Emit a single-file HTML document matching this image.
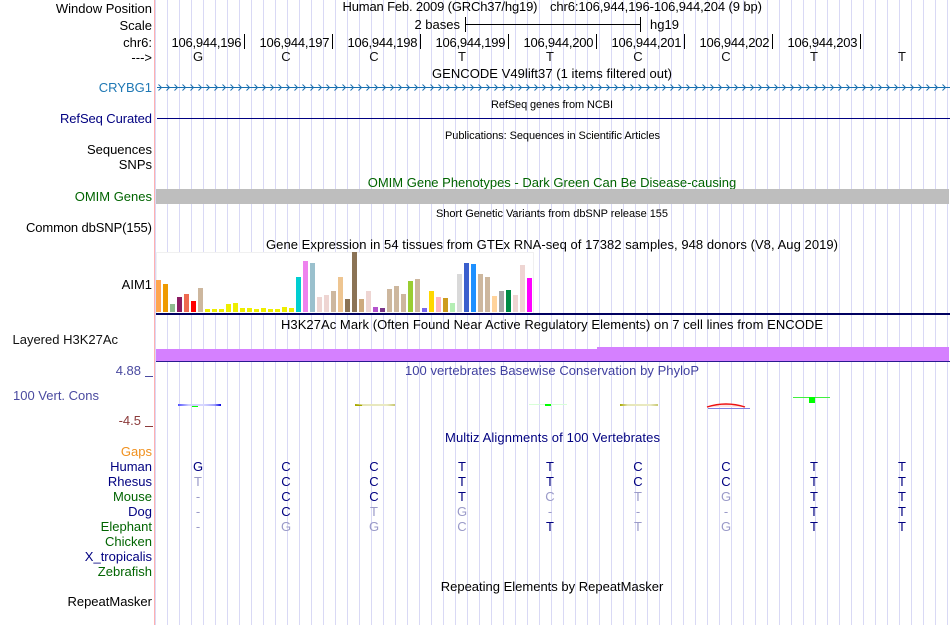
<!DOCTYPE html>
<html><head><meta charset="utf-8"><title>Genome Browser</title>
<style>
html,body{margin:0;padding:0;background:#fff;width:950px;height:625px;overflow:hidden}
svg{display:block;font-family:"Liberation Sans",sans-serif;font-size:13px}
.l{text-anchor:end}.c{text-anchor:middle}.s{font-size:11px}
.n{fill:#000080}.g{fill:#006400}
</style></head><body>
<svg width="950" height="625" viewBox="0 0 950 625" xmlns="http://www.w3.org/2000/svg">
<defs>
<pattern id="grid" x="155" y="0" width="12" height="625" patternUnits="userSpaceOnUse"><rect x="0" y="0" width="1" height="625" fill="#d9d9f5"/></pattern>
<pattern id="chev" x="158" y="83" width="8" height="9" patternUnits="userSpaceOnUse"><path d="M0.5 1.5L3.5 4.5L0.5 7.5" fill="none" stroke="#1c70b0" stroke-width="1"/></pattern>
<linearGradient id="bl"><stop offset="0" stop-color="#5050ff"/><stop offset=".25" stop-color="#d0d0ff"/><stop offset=".6" stop-color="#d8d8ff"/><stop offset=".85" stop-color="#a0a0ff"/><stop offset="1" stop-color="#0000e0"/></linearGradient>
<linearGradient id="ol"><stop offset="0" stop-color="#a8a800"/><stop offset=".2" stop-color="#e6e6b8"/><stop offset=".8" stop-color="#eaeac4"/><stop offset="1" stop-color="#c8c870"/></linearGradient>
</defs>
<rect x="155" y="0" width="795" height="625" fill="url(#grid)"/>
<rect x="154" y="0" width="1" height="625" fill="#ffb0b0"/>

<g fill="#000">
<text class="l" x="152" y="13">Window Position</text>
<text class="l" x="152" y="30">Scale</text>
<text class="l" x="152" y="47">chr6:</text>
<text class="l" x="152" y="62">---&gt;</text>
<text x="342.5" y="11" textLength="195">Human Feb. 2009 (GRCh37/hg19)</text>
<text x="550" y="11" textLength="212">chr6:106,944,196-106,944,204 (9 bp)</text>
<text class="l" x="460" y="29">2 bases</text>
<text x="650" y="29">hg19</text>
<text x="171.5" y="47" textLength="70">106,944,196</text>
<text x="259.5" y="47" textLength="70">106,944,197</text>
<text x="347.5" y="47" textLength="70">106,944,198</text>
<text x="435.5" y="47" textLength="70">106,944,199</text>
<text x="523.5" y="47" textLength="70">106,944,200</text>
<text x="611.5" y="47" textLength="70">106,944,201</text>
<text x="699.5" y="47" textLength="70">106,944,202</text>
<text x="787.5" y="47" textLength="70">106,944,203</text>
</g>
<g fill="#000">
<rect x="465" y="24" width="175" height="1"/><rect x="465" y="17" width="1" height="15"/><rect x="640" y="17" width="1" height="15"/>
<rect x="244" y="34" width="1" height="15"/><rect x="332" y="34" width="1" height="15"/><rect x="420" y="34" width="1" height="15"/><rect x="508" y="34" width="1" height="15"/><rect x="596" y="34" width="1" height="15"/><rect x="684" y="34" width="1" height="15"/><rect x="772" y="34" width="1" height="15"/><rect x="860" y="34" width="1" height="15"/>
</g>
<g text-anchor="middle" fill="#111">
<text x="198" y="61">G</text><text x="286" y="61">C</text><text x="374" y="61">C</text><text x="462" y="61">T</text><text x="550" y="61">T</text><text x="638" y="61">C</text><text x="726" y="61">C</text><text x="814" y="61">T</text><text x="902" y="61">T</text>
</g>

<text class="c" x="552" y="78" textLength="240">GENCODE V49lift37 (1 items filtered out)</text>
<text class="l" x="152" y="92" fill="#1f78b4">CRYBG1</text>
<rect x="157" y="87" width="793" height="1" fill="#1670b0"/>
<rect x="158" y="83" width="792" height="9" fill="url(#chev)"/>

<text class="c s" x="552" y="108" textLength="122">RefSeq genes from NCBI</text>
<text class="l n" x="152" y="123" textLength="92">RefSeq Curated</text>
<rect x="157" y="118" width="793" height="1" fill="#000080"/>

<text class="c s" x="552.5" y="139" textLength="215">Publications: Sequences in Scientific Articles</text>
<text class="l" x="152" y="154">Sequences</text>
<text class="l" x="152" y="169">SNPs</text>

<text class="c g" x="552" y="187">OMIM Gene Phenotypes - Dark Green Can Be Disease-causing</text>
<text class="l g" x="152" y="201">OMIM Genes</text>
<rect x="156" y="189" width="793" height="15" fill="#bebebe"/>

<text class="c s" x="552" y="217" textLength="232">Short Genetic Variants from dbSNP release 155</text>
<text class="l" x="152" y="232" textLength="126">Common dbSNP(155)</text>

<text class="c" x="552" y="249" textLength="572">Gene Expression in 54 tissues from GTEx RNA-seq of 17382 samples, 948 donors (V8, Aug 2019)</text>
<text class="l" x="152" y="289">AIM1</text>
<rect x="156.5" y="252.5" width="377" height="61" fill="#fff" stroke="#f0f0f0"/>
<g>
<rect x="156" y="280" width="5" height="32" fill="#ffa54f"/>
<rect x="163" y="284" width="5" height="28" fill="#ee9a00"/>
<rect x="170" y="304" width="5" height="8" fill="#8fbc8f"/>
<rect x="177" y="297" width="5" height="15" fill="#8b1c62"/>
<rect x="184" y="294" width="5" height="18" fill="#ee6a50"/>
<rect x="191" y="301" width="5" height="11" fill="#ff0000"/>
<rect x="198" y="288" width="5" height="24" fill="#cdb79e"/>
<rect x="205" y="309" width="5" height="3" fill="#eeee00"/>
<rect x="212" y="309" width="5" height="3" fill="#eeee00"/>
<rect x="219" y="309" width="5" height="3" fill="#eeee00"/>
<rect x="226" y="304" width="5" height="8" fill="#eeee00"/>
<rect x="233" y="303" width="5" height="9" fill="#eeee00"/>
<rect x="240" y="308" width="5" height="4" fill="#eeee00"/>
<rect x="247" y="308" width="5" height="4" fill="#eeee00"/>
<rect x="254" y="309" width="5" height="3" fill="#eeee00"/>
<rect x="261" y="308" width="5" height="4" fill="#eeee00"/>
<rect x="268" y="309" width="5" height="3" fill="#eeee00"/>
<rect x="275" y="309" width="5" height="3" fill="#eeee00"/>
<rect x="282" y="307" width="5" height="5" fill="#eeee00"/>
<rect x="289" y="308" width="5" height="4" fill="#eeee00"/>
<rect x="296" y="277" width="5" height="35" fill="#00ced1"/>
<rect x="303" y="261" width="5" height="51" fill="#ee82ee"/>
<rect x="310" y="263" width="5" height="49" fill="#9ac0cd"/>
<rect x="317" y="297" width="5" height="15" fill="#eed5d2"/>
<rect x="324" y="295" width="5" height="17" fill="#eed5d2"/>
<rect x="331" y="291" width="5" height="21" fill="#cdb79e"/>
<rect x="338" y="277" width="5" height="35" fill="#eec591"/>
<rect x="345" y="299" width="5" height="13" fill="#8b7355"/>
<rect x="352" y="252" width="5" height="60" fill="#8b7355"/>
<rect x="359" y="299" width="5" height="13" fill="#cdaa7d"/>
<rect x="366" y="291" width="5" height="21" fill="#eed5d2"/>
<rect x="373" y="307" width="5" height="5" fill="#b452cd"/>
<rect x="380" y="308" width="5" height="4" fill="#7a378b"/>
<rect x="387" y="289" width="5" height="23" fill="#cdb79e"/>
<rect x="394" y="286" width="5" height="26" fill="#cdb79e"/>
<rect x="401" y="294" width="5" height="18" fill="#cdb79e"/>
<rect x="408" y="281" width="5" height="31" fill="#9acd32"/>
<rect x="415" y="279" width="5" height="33" fill="#cdb79e"/>
<rect x="422" y="308" width="5" height="4" fill="#7a67ee"/>
<rect x="429" y="291" width="5" height="21" fill="#ffd700"/>
<rect x="436" y="297" width="5" height="15" fill="#ffb6c1"/>
<rect x="443" y="298" width="5" height="14" fill="#cd9b1d"/>
<rect x="450" y="303" width="5" height="9" fill="#b4eeb4"/>
<rect x="457" y="274" width="5" height="38" fill="#d9d9d9"/>
<rect x="464" y="263" width="5" height="49" fill="#3a5fcd"/>
<rect x="471" y="264" width="5" height="48" fill="#1e90ff"/>
<rect x="478" y="274" width="5" height="38" fill="#cdb79e"/>
<rect x="485" y="277" width="5" height="35" fill="#cdb79e"/>
<rect x="492" y="296" width="5" height="16" fill="#ffd39b"/>
<rect x="499" y="291" width="5" height="21" fill="#a6a6a6"/>
<rect x="506" y="290" width="5" height="22" fill="#008b45"/>
<rect x="513" y="295" width="5" height="17" fill="#eed5d2"/>
<rect x="520" y="265" width="5" height="47" fill="#eed5d2"/>
<rect x="527" y="278" width="5" height="34" fill="#ff00ff"/>
</g>
<rect x="156" y="313" width="794" height="2" fill="#000060"/>

<text class="c" x="552" y="329" textLength="542">H3K27Ac Mark (Often Found Near Active Regulatory Elements) on 7 cell lines from ENCODE</text>
<text class="l" x="118" y="344" fill="#111">Layered H3K27Ac</text>
<rect x="156" y="349" width="441" height="12" fill="#d580ff"/>
<rect x="597" y="347" width="352" height="14" fill="#d580ff"/>
<rect x="156" y="361" width="794" height="1" fill="#2a1a90"/>

<text class="c" x="552" y="375" fill="#3f3f9f" textLength="294">100 vertebrates Basewise Conservation by PhyloP</text>
<text class="l" x="141" y="375" fill="#4a4aa0">4.88</text>
<rect x="145" y="376" width="8" height="1" fill="#4a4aa0"/>
<text x="13" y="400" fill="#4a4aa0">100 Vert. Cons</text>
<text class="l" x="141" y="425" fill="#8b3a3a">-4.5</text>
<rect x="145" y="426" width="8" height="1" fill="#8b3a3a"/>

<rect x="178" y="404" width="43" height="2" fill="url(#bl)"/>
<rect x="192" y="406" width="6" height="1" fill="#00ff00"/>
<rect x="355" y="404" width="40" height="2" fill="url(#ol)"/>
<rect x="355" y="405" width="7" height="1" fill="#a8a800"/>
<rect x="529" y="404" width="38" height="1" fill="#d8ffd8"/>
<rect x="545" y="404" width="6" height="2" fill="#00ff00"/>
<rect x="620" y="404" width="38" height="2" fill="url(#ol)"/>
<path d="M707 407Q726 401 745 407Z" fill="#fbe4e4"/>
<path d="M707 407Q726 401 745 407" fill="none" stroke="#ee1010" stroke-width="1.4"/>
<rect x="708" y="408" width="42" height="1" fill="#8080e0"/>
<rect x="793" y="397" width="37" height="1" fill="#40f040"/>
<rect x="809" y="397" width="6" height="6" fill="#00ff00"/>

<text class="c n" x="552.5" y="442" textLength="215">Multiz Alignments of 100 Vertebrates</text>
<text class="l" x="152" y="456" fill="#f0901e">Gaps</text>
<text class="l n" x="152" y="471">Human</text>
<text class="l n" x="152" y="486">Rhesus</text>
<text class="l g" x="152" y="501">Mouse</text>
<text class="l n" x="152" y="516">Dog</text>
<text class="l g" x="152" y="531">Elephant</text>
<text class="l g" x="152" y="546">Chicken</text>
<text class="l n" x="152" y="561">X_tropicalis</text>
<text class="l g" x="152" y="576">Zebrafish</text>

<g text-anchor="middle" fill="#000080">
<text x="198" y="471">G</text><text x="286" y="471">C</text><text x="374" y="471">C</text><text x="462" y="471">T</text><text x="550" y="471">T</text><text x="638" y="471">C</text><text x="726" y="471">C</text><text x="814" y="471">T</text><text x="902" y="471">T</text>
<text x="286" y="486">C</text><text x="374" y="486">C</text><text x="462" y="486">T</text><text x="550" y="486">T</text><text x="638" y="486">C</text><text x="726" y="486">C</text><text x="814" y="486">T</text><text x="902" y="486">T</text>
<text x="286" y="501">C</text><text x="374" y="501">C</text><text x="462" y="501">T</text><text x="814" y="501">T</text><text x="902" y="501">T</text>
<text x="286" y="516">C</text><text x="814" y="516">T</text><text x="902" y="516">T</text>
<text x="550" y="531">T</text><text x="814" y="531">T</text><text x="902" y="531">T</text>
</g>
<g text-anchor="middle" fill="#9a9ac8">
<text x="198" y="486">T</text>
<text x="198" y="501">-</text><text x="550" y="501">C</text><text x="638" y="501">T</text><text x="726" y="501">G</text>
<text x="198" y="516">-</text><text x="374" y="516">T</text><text x="462" y="516">G</text><text x="550" y="516">-</text><text x="638" y="516">-</text><text x="726" y="516">-</text>
<text x="198" y="531">-</text><text x="286" y="531">G</text><text x="374" y="531">G</text><text x="462" y="531">C</text><text x="638" y="531">T</text><text x="726" y="531">G</text>
</g>

<text class="c" x="552" y="591">Repeating Elements by RepeatMasker</text>
<text class="l" x="152" y="606">RepeatMasker</text>
</svg>
</body></html>
